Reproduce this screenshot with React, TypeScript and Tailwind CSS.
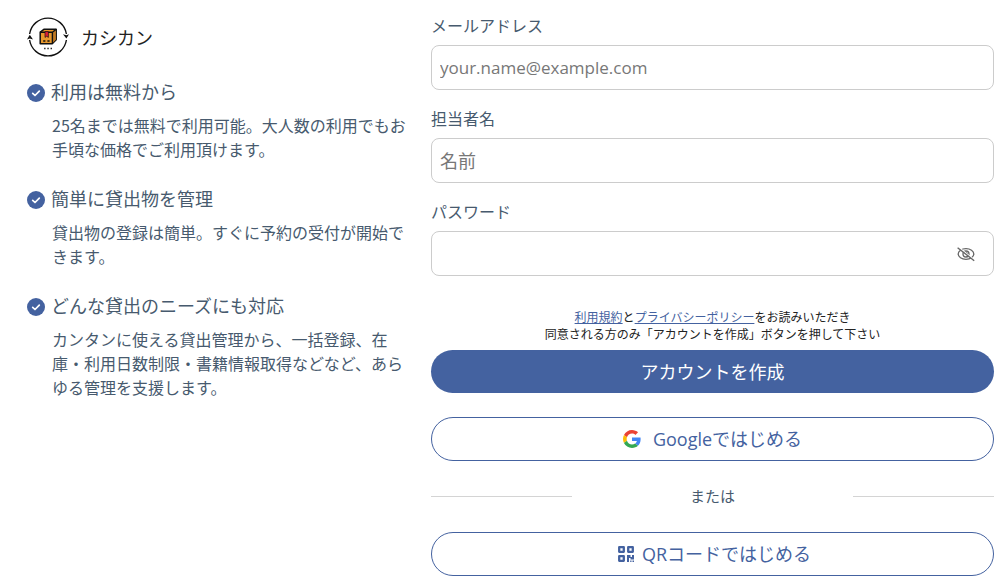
import { useState } from "react";
import type { ReactNode } from "react";

const features = [
  {
    title: "利用は無料から",
    body: "25名までは無料で利用可能。大人数の利用でもお手頃な価格でご利用頂けます。",
  },
  {
    title: "簡単に貸出物を管理",
    body: "貸出物の登録は簡単。すぐに予約の受付が開始できます。",
  },
  {
    title: "どんな貸出のニーズにも対応",
    body: "カンタンに使える貸出管理から、一括登録、在庫・利用日数制限・書籍情報取得などなど、あらゆる管理を支援します。",
  },
];

function Logo() {
  return (
    <svg viewBox="0 0 42 42" className="size-[42px] shrink-0" aria-hidden="true">
      <g fill="none" stroke="#111" strokeWidth="1.4">
        <path d="M2.600 17A18.600 18.600 0 0 1 39.400 17" />
        <path d="M39.400 23A18.600 18.600 0 0 1 2.600 23" />
      </g>
      <path d="M36 17.200l3.400 1 2.600-1-2.600 4.400zM0 22.600l2.800-4.800 3.200 4.600-3.200-1z" fill="#111" />
      <path d="M13.200 15.200l4-3h12v10.600l-4 4H13.200z" fill="#e8982c" stroke="#111" strokeWidth="1.500" strokeLinejoin="round" />
      <path d="M25.400 15.400l3.400-2.700v10l-3.400 3.600z" fill="#c27a22" />
      <path d="M13.200 15.300h12.200v11.500M25.400 15.300l3.800-3" fill="none" stroke="#111" strokeWidth="1.400" />
      <path d="M18 14.600h3.400v5.800l-1.700-1.200-1.700 1.200z" fill="#e01f36" stroke="#111" strokeWidth=".7" />
      <path d="M16.200 24h2.200M20.400 24h2.200" stroke="#111" strokeWidth="1.300" />
      <path d="M17.200 31.500h1.300M20.400 31.500h1.300M23.600 31.500h1.300" stroke="#111" strokeWidth="1.300" />
    </svg>
  );
}

function CheckIcon() {
  return (
    <svg viewBox="0 0 18 18" className="size-[18px] shrink-0" aria-hidden="true">
      <circle cx="9" cy="9" r="9" fill="#4462a0" />
      <path d="M5.700 9.300l2.300 2.200 4.300-4.300" fill="none" stroke="#fff" strokeWidth="1.700" strokeLinecap="round" strokeLinejoin="round" />
    </svg>
  );
}

function EyeOffIcon() {
  return (
    <svg viewBox="0 0 20 20" className="size-5" fill="none" stroke="currentColor" strokeWidth="1.300" aria-hidden="true">
      <ellipse cx="10" cy="10" rx="7.800" ry="5.400" />
      <circle cx="10" cy="10" r="3" />
      <path d="M10 8.600a1.500 1.500 0 0 1 1.400 1.400" />
      <path d="M2.600 3.200l16 13" stroke="#fff" strokeWidth="1.400" />
      <path d="M1.600 3.700l16.600 13" strokeWidth="1.400" />
    </svg>
  );
}

function GoogleIcon() {
  return (
    <svg viewBox="0 0 48 48" className="size-[18px]" aria-hidden="true">
      <path fill="#EA4335" d="M24 9.500c3.540 0 6.710 1.220 9.210 3.600l6.850-6.850C35.900 2.380 30.470 0 24 0 14.620 0 6.510 5.380 2.560 13.220l7.980 6.190C12.430 13.720 17.740 9.500 24 9.500z" />
      <path fill="#4285F4" d="M46.980 24.550c0-1.570-.15-3.090-.38-4.550H24v9.020h12.940c-.58 2.960-2.260 5.480-4.780 7.180l7.730 6c4.510-4.180 7.090-10.360 7.090-17.650z" />
      <path fill="#FBBC05" d="M10.530 28.590c-.48-1.450-.76-2.990-.76-4.590s.27-3.140.76-4.590l-7.980-6.190C.92 16.460 0 20.120 0 24c0 3.880.92 7.540 2.560 10.780l7.970-6.190z" />
      <path fill="#34A853" d="M24 48c6.480 0 11.930-2.130 15.890-5.810l-7.730-6c-2.150 1.450-4.920 2.300-8.160 2.300-6.260 0-11.570-4.220-13.470-9.910l-7.980 6.190C6.510 42.620 14.620 48 24 48z" />
    </svg>
  );
}

function QrIcon() {
  return (
    <svg viewBox="0 0 16 16" className="size-4" fill="none" stroke="currentColor" strokeWidth="2.300" strokeLinejoin="round" aria-hidden="true">
      <path d="M1.200 1.200h4.600v4.600H1.200zM10.200 1.200h4.600v4.600h-4.600zM1.200 10.200h4.600v4.600H1.200z" />
      <path d="M9 9h3.500v2H14V9h2v4.500h-3.500V12H11v4H9zM12.200 14.500h1.300V16h-1.300zM14.500 14.500H16V16h-1.500z" fill="currentColor" stroke="none" />
    </svg>
  );
}

function Field({
  id,
  label,
  type,
  placeholder,
  children,
}: {
  id: string;
  label: string;
  type: string;
  placeholder?: string;
  children?: ReactNode;
}) {
  return (
    <div className="mb-[17px]">
      <label htmlFor={id} className="mb-[7px] block text-base leading-6 text-[#475a6e]">
        {label}
      </label>
      <div className="flex h-[45px] items-center rounded-lg border border-[#ccc] bg-white">
        <input
          id={id}
          type={type}
          placeholder={placeholder}
          className={`h-full min-w-0 flex-1 rounded-lg bg-transparent px-2 text-[#333] placeholder:text-[#777] ${
            type === "email" ? "text-[17px]" : "text-lg"
          }`}
        />
        {children}
      </div>
    </div>
  );
}

export default function App() {
  const [visible, setVisible] = useState(false);

  return (
    <main className="grid grid-cols-[380fr_563fr] gap-6 bg-white pt-[14px] pr-[14px] pb-2 pl-[27px] font-['Open_Sans','Noto_Sans_CJK_JP',sans-serif] text-[#475a6e]">
      <section>
        <header className="mt-[3px] mb-5 flex items-center gap-3 text-lg leading-[42px] text-[#222]">
          <Logo />
          <span>カシカン</span>
        </header>
        <ul className="flex flex-col gap-[25px]">
          {features.map((f) => (
            <li key={f.title}>
              <h2 className="mb-[7px] flex items-center gap-1.5 text-lg leading-[27px]">
                <CheckIcon />
                {f.title}
              </h2>
              <p className="pl-[25px] font-['Noto_Sans_CJK_JP',sans-serif] text-base leading-6">{f.body}</p>
            </li>
          ))}
        </ul>
      </section>

      <section>
        <form onSubmit={(e) => e.preventDefault()}>
          <Field id="email" label="メールアドレス" type="email" placeholder="your.name@example.com" />
          <Field id="name" label="担当者名" type="text" placeholder="名前" />
          <Field id="password" label="パスワード" type={visible ? "text" : "password"}>
            <button
              type="button"
              aria-label="パスワードを表示"
              onClick={() => setVisible(!visible)}
              className="mr-[17px] text-[#666]"
            >
              <EyeOffIcon />
            </button>
          </Field>
          <p className="mt-[33px] mb-[7px] text-center text-xs leading-[17px] text-[#222]">
            <a href="#terms" className="text-[#4462a0] underline">利用規約</a>と
            <a href="#privacy" className="text-[#4462a0] underline">プライバシーポリシー</a>をお読みいただき
            <br />
            同意される方のみ「アカウントを作成」ボタンを押して下さい
          </p>
          <button type="submit" className="h-[43px] w-full rounded-full bg-[#4462a0] text-lg text-white">
            アカウントを作成
          </button>
        </form>
        <button
          type="button"
          className="mt-6 flex h-11 w-full items-center justify-center gap-3 rounded-full border border-[#4462a0] text-lg text-[#4462a0]"
        >
          <GoogleIcon />
          Googleではじめる
        </button>
        <div className="my-6 grid grid-cols-[1fr_2fr_1fr] items-center text-[15px] leading-[23px]">
          <span className="h-px bg-[#d4d4d4]" />
          <span className="text-center">または</span>
          <span className="h-px bg-[#d4d4d4]" />
        </div>
        <button
          type="button"
          className="flex h-11 w-full items-center justify-center gap-2 rounded-full border border-[#4462a0] pl-1 text-lg text-[#4462a0]"
        >
          <QrIcon />
          QRコードではじめる
        </button>
      </section>
    </main>
  );
}
